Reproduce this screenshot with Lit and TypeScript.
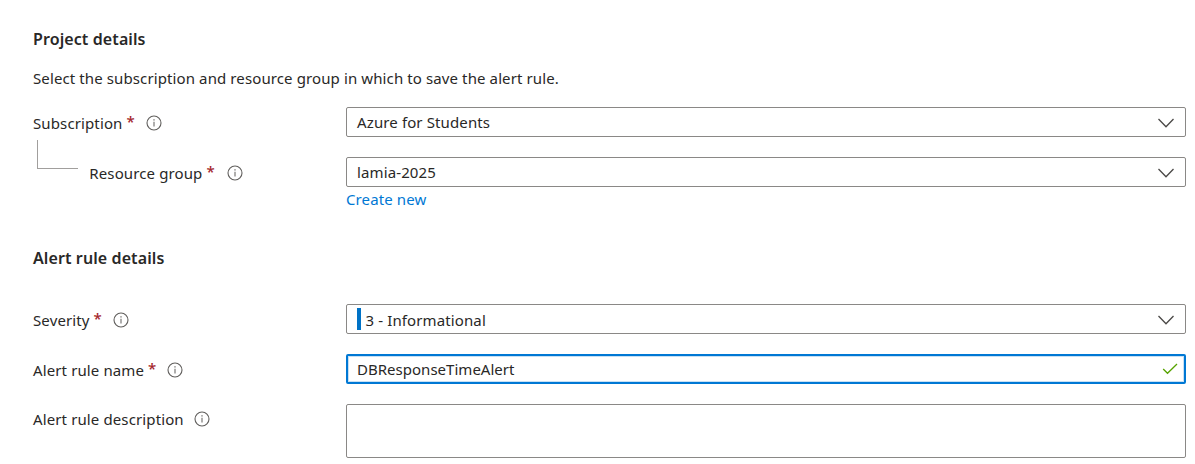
import { LitElement, html, css, nothing } from "lit";
import { customElement, property } from "lit/decorators.js";

@customElement("field-label")
export class FieldLabel extends LitElement {
  @property() text = "";
  @property({ type: Boolean }) required = false;

  static styles = css`
    :host { display: flex; height: 20px; line-height: 20px; white-space: nowrap; }
    .star { color: #a4262c; margin-left: 4px; width: 8px; font-weight: 500; line-height: 17px; }
    .info { display: block; flex: none; width: 16px; height: 16px; margin: 2px 0 0 var(--info-gap, 11.3px); }
    .circle { fill: none; stroke: #605e5c; stroke-width: 1.1; }
    .mark { fill: #605e5c; }
  `;

  render() {
    return html`
      <span>${this.text}</span>
      ${this.required ? html`<span class="star">*</span>` : nothing}
      <svg class="info" viewBox="0 0 16 16">
        <circle class="circle" cx="8" cy="8" r="7" />
        <path class="mark" d="M7.5 6.800h1v4.700h-1zM7.4 4.300h1.200v1.200h-1.200z" />
      </svg>
    `;
  }
}

@customElement("select-box")
export class SelectBox extends LitElement {
  @property() value = "";
  @property({ type: Boolean }) severity = false;

  static styles = css`
    :host {
      display: flex; align-items: center; box-sizing: border-box; height: 30px;
      border: 1px solid #8a8886; border-radius: 2px; padding: 0 11px 0 10px;
    }
    .bar { width: 4px; height: 22px; background: #0072c6; margin-right: 4.5px; }
    .value { flex: 1; line-height: 20px; }
    .lower { padding-top: 1px; }
    .chevron { width: 16px; height: 10px; margin-top: 1px; fill: none; stroke: #4a4846; stroke-width: 1.3; }
  `;

  render() {
    return html`
      ${this.severity ? html`<span class="bar"></span>` : nothing}
      <span class="value ${this.severity ? "lower" : ""}">${this.value}</span>
      <svg class="chevron" viewBox="0 0 16 10"><path d="M.5 1 8 8.700 15.500 1" /></svg>
    `;
  }
}

@customElement("app-root")
export class AppRoot extends LitElement {
  static styles = css`
    :host {
      display: block; box-sizing: border-box; height: 464px; overflow: hidden;
      padding: 28px 9px 0 33px; background: #fff; color: #292827;
      font: 15px/20px "Noto Sans", "Open Sans", sans-serif; letter-spacing: 0.12px;
    }
    h2 { margin: 0; font-size: 16px; line-height: 22px; font-weight: 600; letter-spacing: 0.1px; }
    p { margin: 18px 0 19px; letter-spacing: 0.11px; }
    .row { display: grid; grid-template-columns: 313px 1fr; align-items: start; margin-bottom: 20px; }
    .label { padding-top: 6px; }
    .label.sub { --info-gap: 12px; }
    .label.group { --info-gap: 12.5px; }
    .label.desc { padding-top: 5px; --info-gap: 10px; }
    .child { display: flex; }
    .branch {
      box-sizing: border-box; width: 41px; height: 29px; margin: -17px 11.3px 0 4px;
      border: solid #a19f9d; border-width: 0 0 1px 1px;
    }
    .link { display: block; margin-top: 2px; color: #0078d4; text-decoration: none; }
    .rules { margin: 38px 0 35px; }
    .input {
      display: flex; align-items: center; box-sizing: border-box; height: 30px;
      border: 2px solid #0078d4; border-radius: 2px; padding: 0 6px 0 9px;
      box-shadow: inset 0 0 0 1px #c7e0f4;
    }
    .name { flex: 1; letter-spacing: 0.02px; }
    .check { width: 16px; height: 12px; margin-top: -1px; fill: none; stroke: #57a300; stroke-width: 1.3; }
    .area { box-sizing: border-box; height: 54px; border: 1px solid #8a8886; border-radius: 2px; }
  `;

  render() {
    return html`
      <h2>Project details</h2>
      <p>Select the subscription and resource group in which to save the alert rule.</p>
      <div class="row">
        <field-label class="label sub" text="Subscription" required></field-label>
        <select-box value="Azure for Students"></select-box>
      </div>
      <div class="row">
        <div class="child">
          <span class="branch"></span>
          <field-label class="label group" text="Resource group" required></field-label>
        </div>
        <div>
          <select-box value="lamia-2025"></select-box>
          <a class="link">Create new</a>
        </div>
      </div>
      <h2 class="rules">Alert rule details</h2>
      <div class="row">
        <field-label class="label" text="Severity" required></field-label>
        <select-box value="3 - Informational" severity></select-box>
      </div>
      <div class="row">
        <field-label class="label" text="Alert rule name" required></field-label>
        <div class="input">
          <span class="name">DBResponseTimeAlert</span>
          <svg class="check" viewBox="0 0 16 12"><path d="M1.200 6 5.500 10.300 15 1" /></svg>
        </div>
      </div>
      <div class="row">
        <field-label class="label desc" text="Alert rule description"></field-label>
        <div class="area"></div>
      </div>
    `;
  }
}
